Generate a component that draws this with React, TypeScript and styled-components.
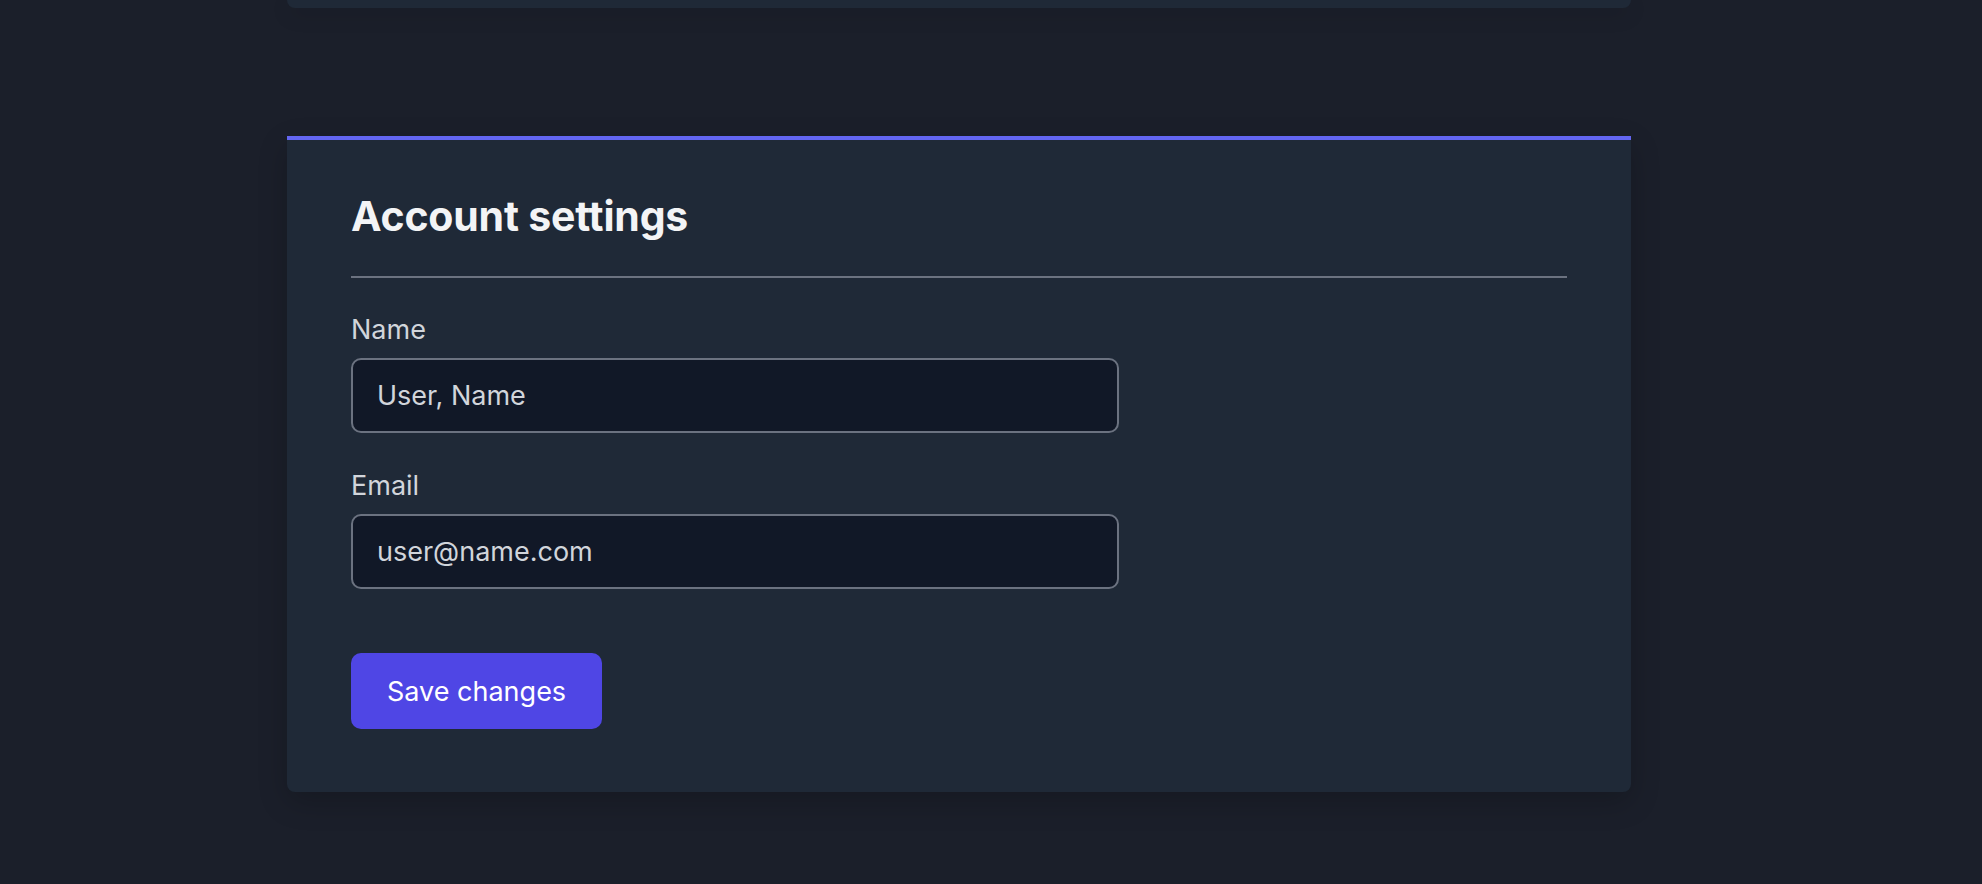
import React from "react";
import styled, { createGlobalStyle } from "styled-components";

const GlobalStyle = createGlobalStyle`
  html, body {
    margin: 0;
    padding: 0;
    background: #1b1f2a;
    font-family: Inter, "Noto Sans", "Liberation Sans", sans-serif;
    -webkit-font-smoothing: antialiased;
  }
  * { box-sizing: border-box; }
`;

const Page = styled.div`
  min-height: 884px;
  background: #1b1f2a;
  padding-left: 287px;
  display: flex;
  flex-direction: column;
  gap: 128px;
`;

const PrevCard = styled.div`
  width: 1344px;
  height: 8px;
  background: #1f2937;
  border-radius: 0 0 8px 8px;
  box-shadow: 0 6px 20px rgba(0, 0, 0, 0.15);
`;

const Card = styled.section`
  width: 1344px;
  background: #1f2937;
  border-top: 4px solid #6366f1;
  border-radius: 0 0 8px 8px;
  padding: 52px 64px 63px;
  box-shadow: 0 10px 30px rgba(0, 0, 0, 0.2);
`;

const Header = styled.div`
  padding-bottom: 35px;
  border-bottom: 2px solid #6b7280;
  margin-bottom: 32px;
`;

const Title = styled.h2`
  margin: 0;
  font-size: 41px;
  line-height: 49px;
  font-weight: 700;
  color: #f3f4f6;
  letter-spacing: -0.2px;
`;

const Form = styled.form`
  display: flex;
  flex-direction: column;
`;

const Field = styled.div`
  display: flex;
  flex-direction: column;
  gap: 8px;
  margin-bottom: 33px;
`;

const Label = styled.label`
  font-size: 27px;
  line-height: 40px;
  color: #d1d5db;
`;

const Input = styled.input`
  width: 768px;
  height: 75px;
  background: #111827;
  border: 2px solid #6b7280;
  border-radius: 10px;
  padding: 0 24px;
  font-family: inherit;
  font-size: 27px;
  color: #d1d5db;
  outline: none;
`;

const Actions = styled.div`
  padding-top: 31px;
  display: flex;
`;

const Button = styled.button`
  height: 76px;
  padding: 0 36px;
  background: #4f46e5;
  color: #ffffff;
  border: none;
  border-radius: 10px;
  font-family: inherit;
  font-size: 27px;
  font-weight: 400;
  cursor: pointer;
`;

export default function App() {
  return (
    <>
      <GlobalStyle />
      <Page>
        <PrevCard />
        <Card>
          <Header>
            <Title>Account settings</Title>
          </Header>
          <Form onSubmit={(e) => e.preventDefault()}>
            <Field>
              <Label htmlFor="name">Name</Label>
              <Input id="name" defaultValue="User, Name" />
            </Field>
            <Field>
              <Label htmlFor="email">Email</Label>
              <Input id="email" defaultValue="user@name.com" />
            </Field>
            <Actions>
              <Button type="submit">Save changes</Button>
            </Actions>
          </Form>
        </Card>
      </Page>
    </>
  );
}
